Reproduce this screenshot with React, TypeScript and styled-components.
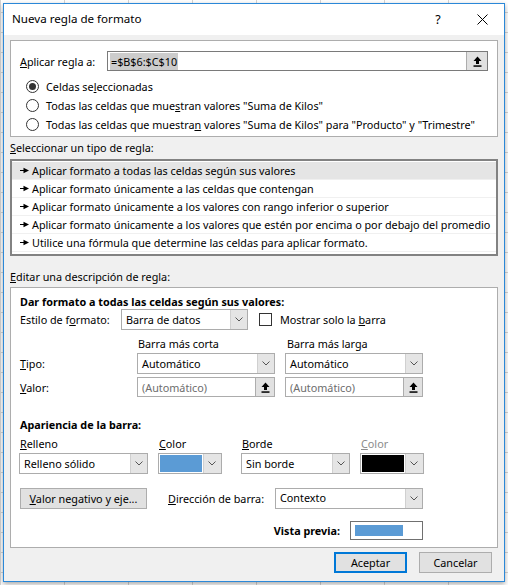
import styled, { createGlobalStyle } from "styled-components";

const GlobalStyle = createGlobalStyle`
  html, body {
    margin: 0;
    padding: 0;
  }
  body {
    width: 508px;
    height: 585px;
    overflow: hidden;
    font-family: "Noto Sans", "Liberation Sans", sans-serif;
    font-size: 10.8px;
    color: #000;
    background-color: #fff;
    background-image: linear-gradient(#d4d4d4 1px, transparent 1px),
      linear-gradient(90deg, #d4d4d4 1px, transparent 1px);
    background-size: 64px 20px;
    background-position: 0 -8px;
  }
`;

const Desktop = styled.div`
  padding: 3px 3px 0 3px;
`;

const Window = styled.div`
  width: 500px;
  height: 577px;
  border: 1px solid #2b88d8;
  background: #f0f0f0;
  box-shadow: 0 2px 5px rgba(0, 0, 0, 0.35);
  display: flex;
  flex-direction: column;
`;

const TitleBar = styled.div`
  height: 31px;
  background: #fff;
  display: flex;
  align-items: center;
  padding-left: 8px;
`;

const Title = styled.div`
  flex: 1;
  font-size: 11.6px;
  padding-bottom: 2px;
`;

const TitleButton = styled.div`
  width: 44px;
  height: 31px;
  display: flex;
  align-items: center;
  justify-content: center;
  font-size: 12.5px;
`;

const Body = styled.div`
  padding: 5px 6px 0 6px;
  display: flex;
  flex-direction: column;
`;

const GroupBox = styled.div<{ $height: number }>`
  height: ${(p) => p.$height}px;
  box-sizing: border-box;
  border: 1px solid #adadad;
  background: #fff;
  padding: 10px 9px 0 9px;
`;

const Row = styled.div<{ $height?: number; $mt?: number }>`
  display: flex;
  align-items: center;
  height: ${(p) => (p.$height ? `${p.$height}px` : "auto")};
  margin-top: ${(p) => p.$mt ?? 0}px;
  white-space: nowrap;
`;

const Label = styled.div<{ $width?: number; $muted?: boolean; $bold?: boolean }>`
  width: ${(p) => (p.$width ? `${p.$width}px` : "auto")};
  flex-shrink: 0;
  color: ${(p) => (p.$muted ? "#8c8c8c" : "#000")};
  font-weight: ${(p) => (p.$bold ? 700 : 400)};
  white-space: nowrap;
`;

const Key = styled.span`
  text-decoration: underline;
`;

const RangeInput = styled.div`
  width: 381px;
  height: 20px;
  box-sizing: border-box;
  border: 1px solid #7a7a7a;
  display: flex;
  align-items: center;
  background: #fff;
`;

const Selected = styled.span`
  background: #cccccc;
  margin-left: 2px;
  padding: 1px 1px;
`;

const Spacer = styled.div`
  flex: 1;
`;

const PickButton = styled.div<{ $size: number }>`
  width: ${(p) => p.$size}px;
  height: 100%;
  box-sizing: border-box;
  flex-shrink: 0;
  background: #e1e1e1;
  border-left: 1px solid #adadad;
  display: flex;
  align-items: center;
  justify-content: center;
`;

const RadioRow = styled.div`
  display: flex;
  align-items: center;
  height: 19px;
  padding-left: 6px;
  gap: 7px;
  white-space: nowrap;
`;

const Radio = styled.div<{ $checked?: boolean }>`
  width: 13px;
  height: 13px;
  box-sizing: border-box;
  flex-shrink: 0;
  border: 1px solid #333;
  border-radius: 50%;
  display: flex;
  align-items: center;
  justify-content: center;
  &::after {
    content: "";
    width: 7px;
    height: 7px;
    border-radius: 50%;
    background: ${(p) => (p.$checked ? "#333" : "transparent")};
  }
`;

const SectionLabel = styled.div<{ $mt: number; $mb: number }>`
  line-height: 16px;
  margin: ${(p) => p.$mt}px 0 ${(p) => p.$mb}px 0;
`;

const RuleList = styled.div`
  height: 97px;
  box-sizing: border-box;
  border: 2px solid #828282;
  background: #fff;
  padding-top: 1px;
`;

const RuleItem = styled.div<{ $selected?: boolean }>`
  height: 18px;
  box-sizing: border-box;
  display: flex;
  align-items: center;
  gap: 3px;
  padding-left: 8px;
  background: ${(p) => (p.$selected ? "#e5e5e5" : "transparent")};
  border-bottom: 1px solid #f0f0f0;
  white-space: nowrap;
  svg {
    flex-shrink: 0;
  }
`;

const EditBox = styled.div`
  height: 261px;
  box-sizing: border-box;
  border: 1px solid #adadad;
  background: #fff;
  padding: 6px 9px 0 9px;
  display: flex;
  flex-direction: column;
`;

const Select = styled.div<{ $width: number; $height?: number; $top?: boolean }>`
  width: ${(p) => p.$width}px;
  height: ${(p) => p.$height ?? 21}px;
  box-sizing: border-box;
  flex-shrink: 0;
  border: 1px solid #acacac;
  background: #fff;
  display: flex;
  align-items: ${(p) => (p.$top ? "flex-start" : "center")};
  padding-left: 4px;
`;

const SelectText = styled.div<{ $muted?: boolean; $top?: boolean }>`
  flex: 1;
  color: ${(p) => (p.$muted ? "#6d6d6d" : "#000")};
  padding-top: ${(p) => (p.$top ? 1 : 0)}px;
  white-space: nowrap;
`;

const DropButton = styled.div`
  width: 17px;
  height: 100%;
  box-sizing: border-box;
  flex-shrink: 0;
  background: #e5e5e5;
  border-left: 1px solid #d0d0d0;
  display: flex;
  align-items: center;
  justify-content: center;
`;

const ColorPicker = styled.div`
  width: 64px;
  height: 21px;
  box-sizing: border-box;
  border: 1px solid #acacac;
  background: #e5e5e5;
  display: flex;
  flex-shrink: 0;
`;

const Swatch = styled.div<{ $color: string }>`
  width: 44px;
  height: 100%;
  box-sizing: border-box;
  border: 1px solid #fff;
  background: ${(p) => p.$color};
`;

const Checkbox = styled.div`
  width: 13px;
  height: 13px;
  box-sizing: border-box;
  border: 1px solid #333;
  background: #fff;
  flex-shrink: 0;
  margin-left: 11px;
  margin-right: 8px;
`;

const Field = styled.div<{ $ml: number }>`
  display: flex;
  flex-direction: column;
  margin-left: ${(p) => p.$ml}px;
  gap: 1px;
`;

const FieldLabel = styled.div<{ $muted?: boolean }>`
  line-height: 16px;
  padding-left: 1px;
  color: ${(p) => (p.$muted ? "#8c8c8c" : "#000")};
`;

const Button = styled.div<{ $width: number; $default?: boolean }>`
  width: ${(p) => p.$width}px;
  height: 21px;
  box-sizing: border-box;
  flex-shrink: 0;
  background: #e1e1e1;
  border: ${(p) => (p.$default ? "2px solid #0078d7" : "1px solid #adadad")};
  display: flex;
  align-items: center;
  justify-content: center;
  white-space: nowrap;
`;

const Gap = styled.div<{ $w: number; $h?: number }>`
  width: ${(p) => p.$w}px;
  height: ${(p) => p.$h ?? 0}px;
  flex-shrink: 0;
`;

const Preview = styled.div`
  width: 73px;
  height: 19px;
  box-sizing: border-box;
  border: 1px solid #707070;
  background: #fff;
  padding: 3px 19px 3px 4px;
  margin-left: 10px;
`;

const PreviewBar = styled.div`
  height: 100%;
  background: #5b9bd5;
`;

const Footer = styled.div`
  display: flex;
  justify-content: flex-end;
  gap: 12px;
  margin-top: 4px;
  padding-right: 6px;
`;

const UpArrow = () => (
  <svg width="9" height="11" viewBox="0 0 9 11">
    <path d="M4.5 0.5 L8.5 5 L6 5 L6 8 L3 8 L3 5 L0.5 5 Z" fill="#000" />
    <rect x="0.5" y="9.3" width="8" height="1.5" fill="#000" />
  </svg>
);

const Chevron = () => (
  <svg width="8" height="5" viewBox="0 0 8 5">
    <path d="M0.5 0.5 L4 4 L7.5 0.5" fill="none" stroke="#555" strokeWidth="1" />
  </svg>
);

const RuleArrow = () => (
  <svg width="9" height="7" viewBox="0 0 9 7">
    <rect x="0" y="3" width="5" height="1" fill="#000" />
    <path d="M3.5 0.8 L9 3.5 L3.5 6.2 Z" fill="#000" />
  </svg>
);

const CloseIcon = () => (
  <svg width="11" height="11" viewBox="0 0 11 11">
    <path d="M0.5 0.5 L10.5 10.5 M10.5 0.5 L0.5 10.5" stroke="#000" strokeWidth="1" />
  </svg>
);

const DropSelect = ({
  width,
  text,
  top,
}: {
  width: number;
  text: string;
  top?: boolean;
}) => (
  <Select $width={width} $top={top}>
    <SelectText $top={top}>{text}</SelectText>
    <DropButton>
      <Chevron />
    </DropButton>
  </Select>
);

const RefInput = ({ width }: { width: number }) => (
  <Select $width={width} $height={20}>
    <SelectText $muted>(Automático)</SelectText>
    <PickButton $size={19}>
      <UpArrow />
    </PickButton>
  </Select>
);

const rules = [
  "Aplicar formato a todas las celdas según sus valores",
  "Aplicar formato únicamente a las celdas que contengan",
  "Aplicar formato únicamente a los valores con rango inferior o superior",
  "Aplicar formato únicamente a los valores que estén por encima o por debajo del promedio",
  "Utilice una fórmula que determine las celdas para aplicar formato.",
];

export default function App() {
  return (
    <>
      <GlobalStyle />
      <Desktop>
        <Window>
          <TitleBar>
            <Title>Nueva regla de formato</Title>
            <TitleButton>?</TitleButton>
            <TitleButton>
              <CloseIcon />
            </TitleButton>
          </TitleBar>
          <Body>
            <GroupBox $height={97}>
              <Row $height={20}>
                <Label $width={87}>
                  <Key>A</Key>plicar regla a:
                </Label>
                <RangeInput>
                  <Selected>=$B$6:$C$10</Selected>
                  <Spacer />
                  <PickButton $size={21}>
                    <UpArrow />
                  </PickButton>
                </RangeInput>
              </Row>
              <Gap $w={0} $h={6} />
              <RadioRow>
                <Radio $checked />
                <span>
                  Celdas se<Key>l</Key>eccionadas
                </span>
              </RadioRow>
              <RadioRow>
                <Radio />
                <span>
                  Todas las celdas que mue<Key>s</Key>tran valores "Suma de Kilos"
                </span>
              </RadioRow>
              <RadioRow>
                <Radio />
                <span>
                  Todas las celdas que muestra<Key>n</Key> valores "Suma de Kilos" para
                  "Producto" y "Trimestre"
                </span>
              </RadioRow>
            </GroupBox>

            <SectionLabel $mt={3} $mb={3}>
              <Key>S</Key>eleccionar un tipo de regla:
            </SectionLabel>
            <RuleList>
              {rules.map((r, i) => (
                <RuleItem key={r} $selected={i === 0}>
                  <RuleArrow />
                  <span>{r}</span>
                </RuleItem>
              ))}
            </RuleList>

            <SectionLabel $mt={13} $mb={2}>
              <Key>E</Key>ditar una descripción de regla:
            </SectionLabel>
            <EditBox>
              <Label $bold>Dar formato a todas las celdas según sus valores:</Label>
              <Row $height={20}>
                <Label $width={101}>
                  Estilo de f<Key>o</Key>rmato:
                </Label>
                <DropSelect width={127} text="Barra de datos" />
                <Checkbox />
                <Label>
                  Mostrar solo la <Key>b</Key>arra
                </Label>
              </Row>
              <Row $height={16} $mt={6}>
                <Label $width={118} />
                <Label $width={149}>Barra más corta</Label>
                <Label>Barra más larga</Label>
              </Row>
              <Row $height={21} $mt={2}>
                <Label $width={117}>
                  <Key>T</Key>ipo:
                </Label>
                <DropSelect width={138} text="Automático" />
                <Gap $w={10} />
                <DropSelect width={138} text="Automático" />
              </Row>
              <Row $height={20} $mt={3}>
                <Label $width={117}>
                  <Key>V</Key>alor:
                </Label>
                <RefInput width={138} />
                <Gap $w={10} />
                <RefInput width={138} />
              </Row>
              <Row $height={16} $mt={19}>
                <Label $bold>Apariencia de la barra:</Label>
              </Row>
              <Row $mt={4}>
                <Field $ml={-1}>
                  <FieldLabel>
                    <Key>R</Key>elleno
                  </FieldLabel>
                  <DropSelect width={129} text="Relleno sólido" />
                </Field>
                <Field $ml={10}>
                  <FieldLabel>
                    <Key>C</Key>olor
                  </FieldLabel>
                  <ColorPicker>
                    <Swatch $color="#5b9bd5" />
                    <DropButton>
                      <Chevron />
                    </DropButton>
                  </ColorPicker>
                </Field>
                <Field $ml={19}>
                  <FieldLabel>
                    <Key>B</Key>orde
                  </FieldLabel>
                  <DropSelect width={109} text="Sin borde" />
                </Field>
                <Field $ml={10}>
                  <FieldLabel $muted>
                    <Key>C</Key>olor
                  </FieldLabel>
                  <ColorPicker>
                    <Swatch $color="#000" />
                    <DropButton>
                      <Chevron />
                    </DropButton>
                  </ColorPicker>
                </Field>
              </Row>
              <Row $height={21} $mt={14}>
                <Button $width={127}>
                  <span>
                    <Key>V</Key>alor negativo y eje...
                  </span>
                </Button>
                <Gap $w={21} />
                <Label $width={107}>
                  <Key>D</Key>irección de barra:
                </Label>
                <DropSelect width={148} text="Contexto" top />
              </Row>
              <Row $height={19} $mt={12}>
                <Spacer />
                <Label $bold>Vista previa:</Label>
                <Preview>
                  <PreviewBar />
                </Preview>
                <Gap $w={65} />
              </Row>
            </EditBox>

            <Footer>
              <Button $width={73} $default>
                Aceptar
              </Button>
              <Button $width={73}>Cancelar</Button>
            </Footer>
          </Body>
        </Window>
      </Desktop>
    </>
  );
}
